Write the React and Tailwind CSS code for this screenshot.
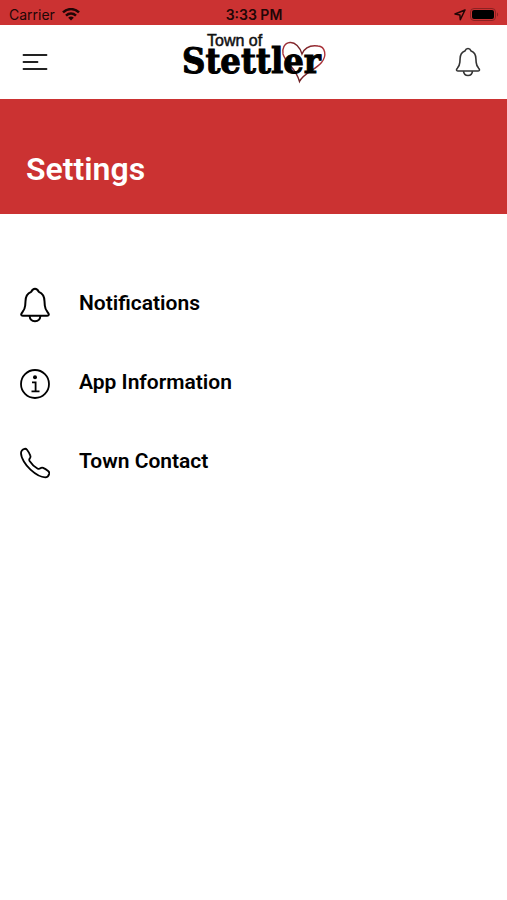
import React from 'react';

const BellIcon = ({ className, strokeWidth = 2 }) => (
  <svg viewBox="0 0 30 36" className={className} fill="none" stroke="currentColor"
    strokeWidth={strokeWidth} strokeLinejoin="round" aria-hidden="true">
    <path d="M15 1.8c-1.900 0-3 1.300-3.800 3.100C7.500 6.300 5.600 9.700 5.500 14.200l-.3 4.300c-.2 3-1.100 4.700-3 7-1.600 1.800-1.200 3.300.6 3.300h24.400c1.800 0 2.200-1.500.6-3.300-1.900-2.300-2.800-4-3-7l-.3-4.300c-.1-4.500-2-7.900-5.700-9.300C18 3.100 16.900 1.800 15 1.800Z" />
    <path d="M9.600 29c.3 3.300 2.500 5.200 5.400 5.200s5.100-1.900 5.400-5.200" />
  </svg>
);

const InfoIcon = ({ className }) => (
  <svg viewBox="0 0 30 36" className={className} fill="none" stroke="currentColor" aria-hidden="true">
    <circle cx="15" cy="18" r="14" strokeWidth="1.800" />
    <circle cx="15" cy="11.300" r="2" fill="currentColor" stroke="none" />
    <path d="M12 16.300h3.600v9M11.500 25.300h8" strokeWidth="1.800" />
  </svg>
);

const PhoneIcon = ({ className }) => (
  <svg viewBox="0 0 30 36" className={className} fill="none" stroke="currentColor"
    strokeWidth="1.800" strokeLinejoin="round" aria-hidden="true">
    <path d="M4.600 3.800C2.500 4.400 1 6.200 1 8.300c0 4.500 4.500 11.700 9.500 16.400 5 4.600 10.800 7.600 14.700 7.600 2.200-.1 3.600-1.700 4-3.600.2-1.100-.2-2-1.100-2.700-1.600-1.300-3.300-2.400-5-3.100-1-.4-1.800-.3-2.700.4-1 .8-1.900.8-3 .2-3.200-1.800-5.800-4.400-7.800-7.500-.6-1-.5-1.800.2-2.600.8-1 .9-2 .4-3.100C9.400 8.400 8.400 6.600 7 4.800c-.7-.9-1.500-1.200-2.400-1Z" />
  </svg>
);

const ITEMS = [
  { id: 'notifications', label: 'Notifications',   icon: BellIcon },
  { id: 'info',          label: 'App Information', icon: InfoIcon },
  { id: 'contact',       label: 'Town Contact',    icon: PhoneIcon },
];

function StatusBar() {
  return (
    <div className="grid h-[25px] grid-cols-3 items-center bg-[#cb3232] pr-2 pl-[9px] pt-1 font-['Inter',sans-serif] text-sm leading-5 text-[#210606]">
      <div className="flex items-center gap-[7px]">
        <span>Carrier</span>
        <svg viewBox="0 0 18 14" className="h-3.5 w-[18px]" fill="none" stroke="currentColor" strokeWidth="2.500" aria-hidden="true">
          <path d="M1 4.400C5.500 0 12.500 0 17 4.400M4 7.700c3-2.800 7-2.800 10 0" />
          <path d="M9 12.500 6.200 9.700c1.600-1.500 4-1.500 5.600 0Z" fill="currentColor" stroke="none" />
        </svg>
      </div>
      <div className="text-center font-semibold">3:33 PM</div>
      <div className="flex items-center justify-end gap-1">
        <svg viewBox="0 0 12 12" className="size-3" fill="none" stroke="currentColor" strokeWidth="1.500" strokeLinejoin="round" aria-hidden="true">
          <path d="M11 1 1 5l4.900.9.400 4.800Z" />
        </svg>
        <svg viewBox="0 0 29 14" className="h-3.5 w-[29px]" aria-hidden="true">
          <rect x=".5" y=".5" width="25" height="12" rx="3.500" fill="none" stroke="#8b2222" />
          <rect x="2" y="2" width="22" height="9" rx="2" fill="#000" />
          <path d="M27 4.500c1.500.5 1.500 3.500 0 4Z" fill="#8b2222" />
        </svg>
      </div>
    </div>
  );
}

function Logo() {
  return (
    <svg viewBox="0 0 150 60" className="h-[60px] w-[150px] overflow-visible" role="img" aria-label="Town of Stettler">
      <defs>
        <linearGradient id="heart" x1="0" y1="0" x2="1" y2="0">
          <stop offset="0" stopColor="#a8323a" />
          <stop offset=".4" stopColor="#6e2226" />
          <stop offset="1" stopColor="#b0323a" />
        </linearGradient>
      </defs>
      <path d="M123 22C121 15 116 10 111 10.500C105 11 103 17 104 22C106.500 31 117 36 120.500 49.500C124.500 41 136.500 38 142.500 30.500C148 24 146.500 14.500 139 14C131.500 13 125.500 16 123 22Z"
        fill="none" stroke="url(#heart)" strokeWidth="1.400" />
      <text x="28" y="14" fontSize="16" fill="#111" stroke="#111" strokeWidth=".5"
        className="font-['Liberation_Sans',sans-serif]">Town of</text>
      <text x="3" y="41" fontSize="36" fontWeight="700" fill="#000" stroke="#000" strokeWidth="1"
        className="font-['DejaVu_Serif_Condensed','Liberation_Serif',serif]">Stettler</text>
    </svg>
  );
}

export default function App() {
  return (
    <div className="min-h-screen bg-white font-['Roboto',sans-serif] text-black">
      <StatusBar />

      {/* Top bar */}
      <header className="grid h-[74px] grid-cols-[1fr_auto_1fr] items-center px-[22px]">
        <button type="button" aria-label="Menu" className="justify-self-start">
          <svg viewBox="0 0 26 18" className="h-[18px] w-[26px]" fill="none" stroke="#222" strokeWidth="1.800" strokeLinecap="round" aria-hidden="true">
            <path d="M1.500 2h23M1.500 9h14M1.500 16h23" />
          </svg>
        </button>
        <Logo />
        <button type="button" aria-label="Notifications" className="justify-self-end pr-1 text-[#333]">
          <BellIcon className="h-[30px] w-[26px]" strokeWidth={1.9} />
        </button>
      </header>

      {/* Title banner */}
      <div className="bg-[#cb3232] px-[26px] pt-[50px] pb-[25px]">
        <h1 className="text-[32px] leading-10 font-semibold text-white">Settings</h1>
      </div>

      <nav className="flex flex-col pt-[51px]">
        {ITEMS.map(({ id, label, icon: Icon }) => (
          <button key={id} type="button" className="flex h-[79px] w-full items-center gap-[29px] px-5 text-left">
            <Icon className="h-9 w-[30px] shrink-0" />
            <span className="pb-1 text-[21px] leading-6 font-semibold">{label}</span>
          </button>
        ))}
      </nav>
    </div>
  );
}
